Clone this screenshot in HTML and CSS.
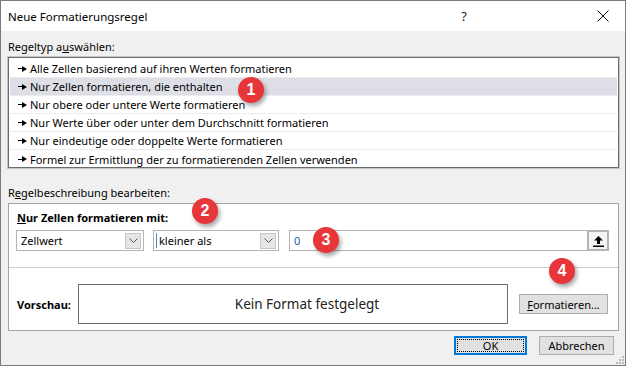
FILE: index.html
```html
<!DOCTYPE html>
<html lang="de">
<head>
    <meta charset="UTF-8" />
    <title>Neue Formatierungsregel</title>
    <link rel="stylesheet" href="styles.css">
</head>
<body>
    <div class="dialog">
        <div class="title-bar">
            <span class="title-text">Neue Formatierungsregel</span>
            <span class="title-help">?</span>
            <svg class="title-close" width="12" height="12" viewBox="0 0 12 12">
                <path d="M0.5 0.5 L11.5 11.5 M11.5 0.5 L0.5 11.5" stroke="#111" stroke-width="1" fill="none"/>
            </svg>
        </div>

        <div class="dialog-body">
            <div class="section-label">Regeltyp a<u>u</u>swählen:</div>
            <ul class="rule-list">
                <li class="rule-item"><span class="rule-arrow"></span>Alle Zellen basierend auf ihren Werten formatieren</li>
                <li class="rule-item selected"><span class="rule-arrow"></span>Nur Zellen formatieren, die enthalten</li>
                <li class="rule-item"><span class="rule-arrow"></span>Nur obere oder untere Werte formatieren</li>
                <li class="rule-item"><span class="rule-arrow"></span>Nur Werte über oder unter dem Durchschnitt formatieren</li>
                <li class="rule-item"><span class="rule-arrow"></span>Nur eindeutige oder doppelte Werte formatieren</li>
                <li class="rule-item last"><span class="rule-arrow"></span>Formel zur Ermittlung der zu formatierenden Zellen verwenden</li>
            </ul>

            <div class="section-label second">R<u>e</u>gelbeschreibung bearbeiten:</div>
            <div class="rule-box">
                <div class="rule-heading"><u>N</u>ur Zellen formatieren mit:</div>
                <div class="rule-fields">
                    <div class="combo combo-first">
                        <span class="combo-text">Zellwert</span>
                        <span class="combo-btn">
                            <svg width="9" height="5" viewBox="0 0 9 5"><path d="M0.5 0.5 L4.5 4.5 L8.5 0.5" stroke="#555" fill="none"/></svg>
                        </span>
                    </div>
                    <div class="combo combo-second">
                        <span class="combo-text focused">kleiner als</span>
                        <span class="combo-btn">
                            <svg width="9" height="5" viewBox="0 0 9 5"><path d="M0.5 0.5 L4.5 4.5 L8.5 0.5" stroke="#555" fill="none"/></svg>
                        </span>
                    </div>
                    <div class="value-input">
                        <span class="value-text">0</span>
                        <span class="ref-btn">
                            <svg width="11" height="12" viewBox="0 0 11 12">
                                <path d="M5.5 1 L10 5.5 L7 5.5 L7 9 L4 9 L4 5.5 L1 5.5 Z" fill="#000"/>
                                <rect x="0" y="10.5" width="11" height="1.5" fill="#000"/>
                            </svg>
                        </span>
                    </div>
                </div>
                <div class="rule-sep"></div>
                <div class="preview-row">
                    <span class="preview-label">Vorschau:</span>
                    <div class="preview-box">Kein Format festgelegt</div>
                    <button class="btn btn-format"><u>F</u>ormatieren...</button>
                </div>
            </div>

            <div class="dialog-buttons">
                <button class="btn btn-ok"><span class="focus-ring">OK</span></button>
                <button class="btn btn-cancel">Abbrechen</button>
            </div>
        </div>

        <svg class="grip" width="8" height="8" viewBox="0 0 8 8">
            <rect x="6" y="0" width="2" height="2" fill="#b8b8b8"/>
            <rect x="3" y="3" width="2" height="2" fill="#b8b8b8"/>
            <rect x="6" y="3" width="2" height="2" fill="#b8b8b8"/>
            <rect x="0" y="6" width="2" height="2" fill="#b8b8b8"/>
            <rect x="3" y="6" width="2" height="2" fill="#b8b8b8"/>
            <rect x="6" y="6" width="2" height="2" fill="#b8b8b8"/>
        </svg>

        <!-- callout markers -->
        <span class="marker marker-1">1</span>
        <span class="marker marker-2">2</span>
        <span class="marker marker-3">3</span>
        <span class="marker marker-4">4</span>
    </div>
</body>
</html>
```

FILE: styles.css
```css
* {
    margin: 0;
    padding: 0;
    box-sizing: border-box;
}

body {
    font-family: 'Noto Sans', 'Open Sans', sans-serif;
    font-size: 11px;
    color: #000;
    background: #fff;
}

.dialog {
    position: relative;
    width: 626px;
    height: 366px;
    border: 1px solid #7a7a7a;
    background: #f0f0f0;
    display: flex;
    flex-direction: column;
}

.title-bar {
    height: 30px;
    background: #fff;
    display: flex;
    align-items: center;
    padding-left: 7px;
    font-size: 11.5px;
}

.title-text {
    flex: 1;
}

.title-help {
    font-size: 13px;
    margin-right: 130px;
    color: #222;
}

.title-close {
    margin-right: 16px;
}

.dialog-body {
    padding: 0 6px 0 7px;
    display: flex;
    flex-direction: column;
}

.section-label {
    height: 16px;
    line-height: 16px;
    margin-top: 8px;
    margin-bottom: 2px;
}

.section-label.second {
    margin-top: 17px;
}

.rule-list {
    list-style: none;
    height: 111px;
    border: 1px solid #6c6c6c;
    box-shadow: 0 0 0 1px #c4c4c4;
    background: #fff;
    padding: 2px 1px 0;
}

.rule-item {
    height: 18px;
    line-height: 17px;
    padding-left: 8px;
    border-bottom: 1px solid #ececec;
    display: flex;
    align-items: center;
    white-space: nowrap;
}

.rule-item.last {
    border-bottom: none;
}

.rule-item.selected {
    background: #dedee6;
}

.rule-arrow {
    width: 9px;
    height: 7px;
    margin-right: 3px;
    position: relative;
}

.rule-arrow::before {
    content: "";
    position: absolute;
    left: 0;
    top: 3px;
    width: 5px;
    height: 1px;
    background: #000;
}

.rule-arrow::after {
    content: "";
    position: absolute;
    left: 4px;
    top: 0.5px;
    border-left: 5px solid #000;
    border-top: 3px solid transparent;
    border-bottom: 3px solid transparent;
}

.rule-box {
    height: 128px;
    border: 1px solid #a4a4a4;
    background: #fff;
    display: flex;
    flex-direction: column;
}

.rule-heading {
    font-weight: 700;
    height: 16px;
    line-height: 16px;
    margin-top: 6px;
    padding-left: 8px;
}

.rule-fields {
    display: flex;
    margin-top: 4px;
    padding-left: 7px;
}

.combo {
    height: 21px;
    border: 1px solid #b4b4b4;
    display: flex;
    align-items: center;
    padding: 0 2px 0 4px;
}

.combo-first {
    width: 128px;
    margin-right: 9px;
}

.combo-second {
    width: 126px;
    margin-right: 10px;
}

.combo-text {
    flex: 1;
}

.combo-text.focused {
    border-left: 1px solid #3b8fe0;
    padding-left: 2px;
    margin-left: -2px;
}

.combo-btn {
    width: 16px;
    height: 16px;
    background: #e6e6e6;
    border: 1px solid #c6c6c6;
    display: flex;
    align-items: center;
    justify-content: center;
}

.value-input {
    width: 320px;
    height: 21px;
    border: 1px solid #b4b4b4;
    display: flex;
    align-items: center;
    padding-left: 4px;
}

.value-text {
    flex: 1;
    color: #1c5fa8;
}

.ref-btn {
    width: 22px;
    height: 21px;
    margin-right: -1px;
    background: #f4f4f4;
    border: 2px solid #b4b4b4;
    display: flex;
    align-items: center;
    justify-content: center;
}

.rule-sep {
    height: 1px;
    background: #cdcdcd;
    margin-top: 16px;
}

.preview-row {
    display: flex;
    align-items: center;
    margin-top: 16px;
    padding-left: 8px;
}

.preview-label {
    font-weight: 700;
    width: 61px;
}

.preview-box {
    width: 430px;
    height: 40px;
    border: 1px solid #6e6e6e;
    display: flex;
    align-items: center;
    justify-content: center;
    font-size: 13.5px;
    color: #222;
    padding-left: 28px;
}

.btn {
    font-family: inherit;
    font-size: 11px;
    color: #000;
    background: #e1e1e1;
    border: 1px solid #adadad;
    height: 20px;
}

.btn-format {
    width: 89px;
    margin-left: 11px;
}

.dialog-buttons {
    display: flex;
    justify-content: flex-end;
    margin-top: 5px;
    margin-right: 5px;
}

.btn-ok {
    width: 73px;
    height: 19px;
    border: 1px solid #0078d7;
    box-shadow: inset 0 0 0 1px #0078d7;
    margin-right: 12px;
    padding: 2px;
}

.focus-ring {
    display: block;
    height: 100%;
    border: 1px dotted #000;
    line-height: 11px;
}

.btn-cancel {
    width: 75px;
    height: 19px;
}

.grip {
    position: absolute;
    right: 1px;
    bottom: 1px;
}

.marker {
    position: absolute;
    width: 26px;
    height: 26px;
    border-radius: 50%;
    background: #e8353a;
    color: #fff;
    font-family: 'Liberation Sans', Arial, sans-serif;
    font-weight: 700;
    font-size: 16px;
    line-height: 26px;
    text-align: center;
    box-shadow: 2px 3px 4px rgba(0, 0, 0, 0.35);
}

.marker-1 { left: 237px; top: 76px; }
.marker-2 { left: 191px; top: 197px; }
.marker-3 { left: 312px; top: 226px; }
.marker-4 { left: 548px; top: 257px; }
```
